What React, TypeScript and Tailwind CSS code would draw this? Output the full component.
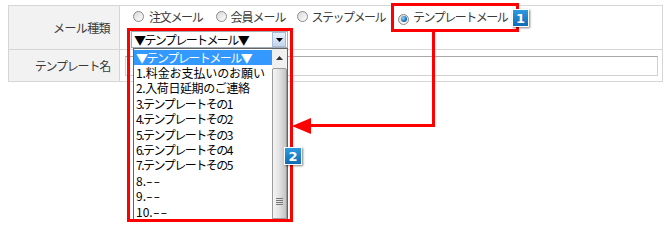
import React from "react";

const font = { fontFamily: '"Noto Sans CJK JP", "Noto Sans", sans-serif' };

function Radio({ checked }: { checked?: boolean }) {
  return (
    <span className="relative inline-flex h-[11px] w-[11px] shrink-0 items-center justify-center rounded-full border border-[#8a8a8a] bg-gradient-to-br from-[#d8d8d8] to-[#ffffff]">
      {checked && (
        <span className="h-[6px] w-[6px] rounded-full bg-[radial-gradient(circle_at_35%_35%,#9fd3ff,#1b6fb8_60%,#0b3d73)]" />
      )}
    </span>
  );
}

function Badge({ n, className }: { n: string; className: string }) {
  return (
    <div
      className={
        "absolute flex items-center justify-center border border-white bg-gradient-to-b from-[#2d9be0] to-[#0a6db5] text-[13px] font-bold leading-none text-white shadow-[1px_1px_2px_rgba(0,0,0,0.5)] " +
        className
      }
      style={{ fontFamily: '"DejaVu Sans", sans-serif' }}
    >
      {n}
    </div>
  );
}

const items: { t: string; c: string; dash?: boolean }[] = [
  { t: "1.料金お支払いのお願い", c: "tracking-[-0.1px]" },
  { t: "2.入荷日延期のご連絡", c: "tracking-[-0.4px]" },
  { t: "3.テンプレートその1", c: "tracking-[-1.5px]" },
  { t: "4.テンプレートその2", c: "tracking-[-1.5px]" },
  { t: "5.テンプレートその3", c: "tracking-[-1.5px]" },
  { t: "6.テンプレートその4", c: "tracking-[-1.5px]" },
  { t: "7.テンプレートその5", c: "tracking-[-1.5px]" },
  { t: "8.", c: "", dash: true },
  { t: "9.", c: "", dash: true },
  { t: "10.", c: "", dash: true },
];

export default function App() {
  return (
    <div className="relative h-[233px] w-[670px] overflow-hidden bg-white pl-[8px] pt-[5px] text-[12px]" style={font}>
      {/* table */}
      <div className="w-[655px] border border-[#d6d6d6]">
        <div className="flex h-[44px] border-b border-[#d6d6d6]">
          <div className="flex w-[111px] shrink-0 items-center justify-end border-r border-[#d6d6d6] bg-[#f2f2f2] pr-[9px] tracking-[-0.6px] text-[#3a3a3a]">
            メール種類
          </div>
          <div className="flex flex-col pl-[11px] pt-[3px]">
            <div className="flex h-[16px] items-center text-[#3a3a3a]">
              <span className="ml-[2px]"><Radio /></span>
              <span className="ml-[5px] whitespace-nowrap tracking-[-1.3px]">注文メール</span>
              <span className="ml-[13px]"><Radio /></span>
              <span className="ml-[4px] whitespace-nowrap tracking-[-1px]">会員メール</span>
              <span className="ml-[11px]"><Radio /></span>
              <span className="ml-[4px] whitespace-nowrap tracking-[-1.5px]">ステップメール</span>
              <span className="ml-[13px]"><Radio checked /></span>
              <span className="ml-[4px] whitespace-nowrap tracking-[-1.5px]">テンプレートメール</span>
            </div>
            <div className="mt-[6px] flex h-[17px] w-[157px] items-center border border-[#a5acb5] bg-white">
              <span className="flex-1 whitespace-nowrap pl-[2px] leading-none tracking-[-1.6px] text-black">▼テンプレートメール▼</span>
              <span className="mr-[1px] flex h-[15px] w-[14px] shrink-0 items-center justify-center border border-[#a9bcd6] bg-gradient-to-b from-[#e8f0fb] to-[#c4d5ee]">
                <svg width="7" height="4" viewBox="0 0 7 4"><path d="M0 0h7L3.5 4z" fill="#000" /></svg>
              </span>
            </div>
          </div>
        </div>
        <div className="flex h-[31px]">
          <div className="flex w-[111px] shrink-0 items-center justify-end border-r border-[#d6d6d6] bg-[#f2f2f2] pr-[9px] tracking-[-1.2px] text-[#3a3a3a]">
            テンプレート名
          </div>
          <div className="flex flex-1 items-center pl-[5px] pr-[4px]">
            <div className="h-[20px] w-full border border-[#d0d0d0] border-t-[#a8a8a8] bg-white" />
          </div>
        </div>
      </div>

      {/* open dropdown list */}
      <div className="absolute left-[133px] top-[48px] flex h-[172px] w-[155px] border border-[#646464] bg-white">
        <div className="flex-1 pt-[1px] text-black">
          <div className="flex h-[15.4px] items-center whitespace-nowrap bg-[#3399ff] pl-[2px] tracking-[-1.5px] text-white">
            ▼テンプレートメール▼
          </div>
          {items.map((it) => (
            <div key={it.t} className={"flex h-[15.4px] items-center whitespace-nowrap pl-[2px] " + it.c}>
              {it.t}
              {it.dash && <span className="inline-block origin-left scale-x-[1.6] tracking-[0.5px]">--</span>}
            </div>
          ))}
        </div>
        <div className="relative flex w-[15px] flex-col bg-[#f0f0f0]">
          <div className="flex h-[17px] items-center justify-center">
            <svg width="7" height="4" viewBox="0 0 7 4"><path d="M0 4h7L3.5 0z" fill="#333" /></svg>
          </div>
          <div className="relative mt-[2px] flex-1 rounded-t-[2px] border border-[#9a9a9a] bg-gradient-to-r from-[#f6f6f6] via-[#e2e2e2] to-[#c4c4c4]">
            <div className="absolute left-[3px] top-[129px] flex w-[7px] flex-col gap-[1px]">
              <div className="h-[1px] bg-[#777]" />
              <div className="h-[1px] bg-[#777]" />
              <div className="h-[1px] bg-[#777]" />
              <div className="h-[1px] bg-[#777]" />
            </div>
          </div>
        </div>
      </div>

      {/* annotations */}
      <div className="absolute left-[391px] top-[3px] h-[29px] w-[128px] border-[3px] border-[#ff0000]" />
      <Badge n="1" className="left-[512px] top-[9px] h-[18px] w-[17px]" />
      <div className="absolute left-[432px] top-[31px] h-[96px] w-[3px] bg-[#ff0000]" />
      <div className="absolute left-[306px] top-[124px] h-[3px] w-[129px] bg-[#ff0000]" />
      <svg className="absolute left-[292px] top-[118px]" width="19" height="16" viewBox="0 0 19 16">
        <path d="M0 8L19 0V16z" fill="#ff0000" />
      </svg>
      <div className="absolute left-[127px] top-[28px] h-[194px] w-[166px] border-[3px] border-[#ff0000]" />
      <Badge n="2" className="left-[284px] top-[147px] h-[18px] w-[18px]" />
    </div>
  );
}
